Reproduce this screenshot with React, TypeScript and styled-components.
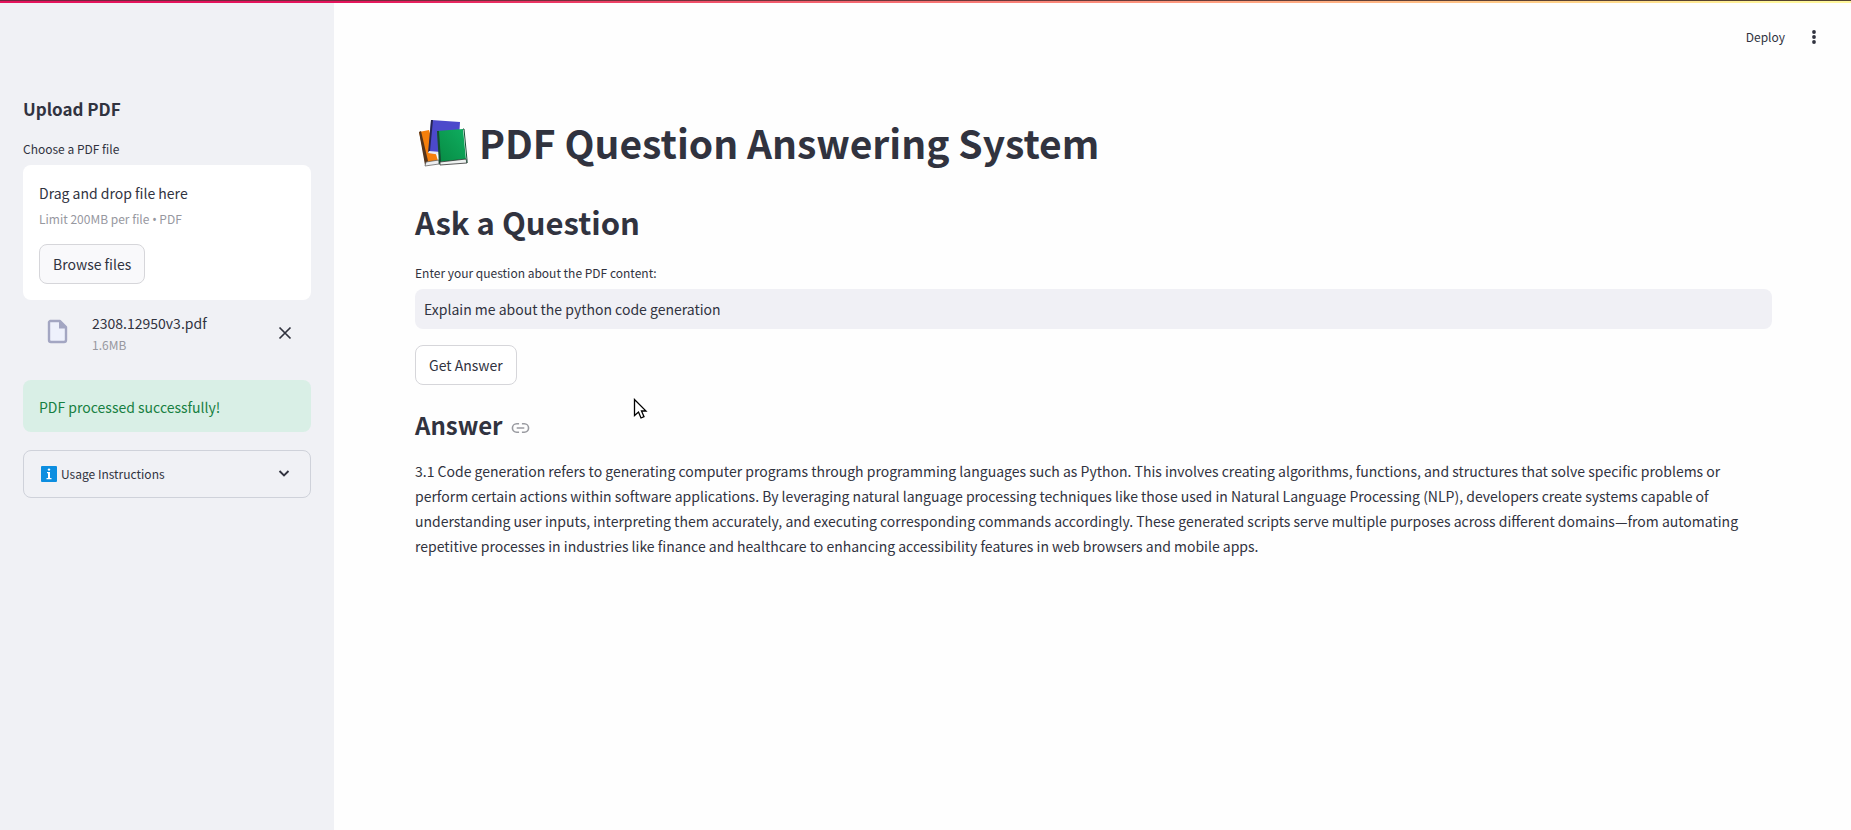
import React from "react";
import styled, { createGlobalStyle } from "styled-components";

const Global = createGlobalStyle`
  *, *::before, *::after { box-sizing: border-box; }
  body {
    margin: 0;
    background: #fefefe;
    color: #31333f;
    font-family: "Noto Sans CJK SC", "Noto Sans", sans-serif;
    font-size: 14px;
    line-height: 26px;
  }
  h1, h2, h3, p { margin: 0; }
  button, input { font: inherit; color: inherit; }
`;

const Page = styled.div`
  display: grid;
  grid-template-columns: 334px minmax(0, 1fr);
  grid-template-rows: 3px auto;
  min-height: 100vh;
`;

const Decoration = styled.div`
  grid-column: 1 / -1;
  border-top: 1px solid #66303c;
  border-image: linear-gradient(90deg, #74243f 0%, #74303c 30%, #664038 70%, #54442f 100%) 1;
  border-width: 1px 0 0;
  background: linear-gradient(90deg, #e4135c 0%, #e4135c 18%, #f05069 38%, #ff9f80 66%, #ffd78a 86%, #fff79c 96%);
`;

const Sidebar = styled.aside`
  background: #f0f1f5;
  padding: 91px 23px 24px;
`;

const SideTitle = styled.h2`
  font-size: 17px;
  line-height: 30px;
  font-weight: 600;
  margin-bottom: 14px;
`;

const FieldLabel = styled.label`
  display: block;
  font-size: 12px;
  line-height: 22px;
  margin-bottom: 5px;
`;

const DropZone = styled.section`
  background: #ffffff;
  border-radius: 8px;
  padding: 15px 16px 16px;
`;

const Muted = styled.p`
  font-size: 12px;
  line-height: 20px;
  color: #97989f;
`;

const Limit = styled(Muted)`
  margin-top: 3px;
`;

const Bullet = styled.span`
  font-family: "Noto Sans", sans-serif;
`;

const Button = styled.button<{ $tint?: boolean }>`
  display: block;
  height: 40px;
  padding: 0 13px;
  border: 1px solid #d6d6da;
  border-radius: 8px;
  background: ${(p) => (p.$tint ? "#f9f9fb" : "#ffffff")};
  white-space: nowrap;
`;

const BrowseButton = styled(Button)`
  margin-top: 14px;
`;

const FileRow = styled.div`
  display: flex;
  align-items: center;
  padding: 11px 16px 7px;
  margin-bottom: 18px;
`;

const FileIcon = styled.svg`
  width: 36px;
  height: 36px;
  flex: none;
`;

const FileInfo = styled.div`
  flex: 1;
  min-width: 0;
  padding-left: 17px;
  line-height: 24px;
`;

const IconButton = styled.button`
  display: flex;
  align-items: center;
  justify-content: center;
  width: 20px;
  height: 24px;
  padding: 0;
  border: 0;
  background: none;
`;

const Success = styled.div`
  padding: 14px 16px 12px;
  margin-bottom: 18px;
  border-radius: 8px;
  background: #d9efe6;
  color: #177f42;
`;

const Expander = styled.button`
  display: flex;
  align-items: center;
  width: 100%;
  height: 48px;
  padding: 0 18px 0 17px;
  border: 1px solid #cfd2da;
  border-radius: 8px;
  background: none;
  font-size: 12px;
`;

const ExpanderText = styled.span`
  flex: 1;
  padding-left: 4px;
  text-align: left;
`;

const Main = styled.main`
  display: flex;
  flex-direction: column;
`;

const Toolbar = styled.header`
  display: flex;
  justify-content: flex-end;
  align-items: center;
  gap: 19px;
  height: 68px;
  padding-right: 27px;
`;

const TextButton = styled.button`
  padding: 0;
  border: 0;
  background: none;
  font-size: 12px;
`;

const Content = styled.div`
  display: flex;
  flex-direction: column;
  align-items: flex-start;
  padding: 38px 79px 40px 81px;
`;

const Title = styled.h1`
  display: flex;
  align-items: center;
  gap: 9px;
  font-size: 39px;
  line-height: 66px;
  font-weight: 700;
  margin-bottom: 22px;
`;

const Heading = styled.h2`
  font-size: 31px;
  line-height: 50px;
  font-weight: 600;
  margin-bottom: 15px;
`;

const QuestionInput = styled.input`
  width: 100%;
  height: 40px;
  padding: 0 9px;
  border: 0;
  border-radius: 8px;
  background: #f0f0f5;
  outline: none;
  margin-bottom: 16px;
`;

const AnswerHeading = styled.h3`
  display: flex;
  align-items: center;
  gap: 8px;
  font-size: 24px;
  line-height: 40px;
  font-weight: 600;
  margin: 20px 0 14px;
`;

const Anchor = styled.a`
  display: flex;
  color: #9a9ba1;
  padding-top: 5px;
`;

const AnswerText = styled.p`
  line-height: 25px;
`;

const Pointer = styled.svg`
  position: absolute;
  left: 633px;
  top: 398px;
`;

const Books = () => (
  <svg width="55" height="52" viewBox="0 0 55 52" aria-hidden="true">
    <defs>
      <linearGradient id="green" x1="0" y1="1" x2="1" y2="0">
        <stop offset="0" stopColor="#078a43" />
        <stop offset="1" stopColor="#0fae60" />
      </linearGradient>
    </defs>
    <path d="M4 16l10-2 9 31-12 3z" fill="#f57f0c" />
    <path d="M4 16l2-1 7 30-3 4z" fill="#55351c" />
    <path d="M11 46l13-2v4l-14 2z" fill="#eceef0" stroke="#555" strokeWidth=".7" />
    <path d="M16 4l29 2-2 32-29-1z" fill="#4c49cb" />
    <path d="M16 4h2l-3 31-2 2z" fill="#262650" />
    <path d="M14 35l12 1v3l-13-2z" fill="#e9ebf2" />
    <path d="M22 15l26-2 3 31-26 2z" fill="url(#green)" />
    <path d="M22 15h2l2 30-2 4z" fill="#164c33" />
    <path d="M25 46l26-3 1 4-27 2z" fill="#eef1f0" stroke="#333" strokeWidth=".8" />
    <path d="M48 13h1l3 31v3" fill="none" stroke="#174c34" />
  </svg>
);

export default function App() {
  return (
    <Page>
      <Global />
      <Decoration />
      <Sidebar>
        <SideTitle>Upload PDF</SideTitle>
        <FieldLabel htmlFor="browse">Choose a PDF file</FieldLabel>
        <DropZone>
          <p>Drag and drop file here</p>
          <Limit>Limit 200MB per file <Bullet>•</Bullet> PDF</Limit>
          <BrowseButton id="browse" type="button" $tint>Browse files</BrowseButton>
        </DropZone>
        <FileRow>
          <FileIcon viewBox="0 0 36 36" aria-hidden="true">
            <path d="M11 6h10l6 6v13a2 2 0 0 1-2 2H12a2 2 0 0 1-2-2V7z" fill="#eef1fc" stroke="#a3a6c2" strokeWidth="2.400" strokeLinejoin="round" />
            <path d="M20 5.500l8 8h-8z" fill="#a3a6c2" />
          </FileIcon>
          <FileInfo>
            <p>2308.12950v3.pdf</p>
            <Muted>1.6MB</Muted>
          </FileInfo>
          <IconButton type="button" aria-label="Remove file">
            <svg width="14" height="14" viewBox="0 0 14 14"><path d="M1.500 1.500l11 11M12.500 1.500l-11 11" stroke="#31333f" strokeWidth="1.700" /></svg>
          </IconButton>
        </FileRow>
        <Success role="status">PDF processed successfully!</Success>
        <Expander type="button" aria-expanded="false">
          <svg width="16" height="16" viewBox="0 0 16 16" aria-hidden="true">
            <rect width="16" height="16" rx="1" fill="#0c8ee0" />
            <path d="M6 6h3v6h1.500v1.200h-5V12H7V7.200H6z" fill="#fff" />
            <circle cx="8" cy="3.600" r="1.200" fill="#fff" />
          </svg>
          <ExpanderText>Usage Instructions</ExpanderText>
          <svg width="16" height="16" viewBox="0 0 16 16" aria-hidden="true"><path d="M3.500 5l4.500 4.500L12.500 5" fill="none" stroke="#31333f" strokeWidth="1.900" /></svg>
        </Expander>
      </Sidebar>
      <Main>
        <Toolbar>
          <TextButton type="button">Deploy</TextButton>
          <IconButton type="button" aria-label="Menu">
            <svg width="6" height="16" viewBox="0 0 6 16" fill="#31333f"><circle cx="3" cy="3" r="1.900" /><circle cx="3" cy="8" r="1.900" /><circle cx="3" cy="13" r="1.900" /></svg>
          </IconButton>
        </Toolbar>
        <Content>
          <Title><Books />PDF Question Answering System</Title>
          <Heading>Ask a Question</Heading>
          <FieldLabel htmlFor="question">Enter your question about the PDF content:</FieldLabel>
          <QuestionInput id="question" type="text" defaultValue="Explain me about the python code generation" />
          <Button type="button">Get Answer</Button>
          <AnswerHeading id="answer">
            Answer
            <Anchor href="#answer" aria-label="Link to answer">
              <svg width="19" height="12" viewBox="0 0 20 12" fill="none" stroke="currentColor" strokeWidth="1.700">
                <path d="M8.500 1.500H6a4.500 4.500 0 0 0 0 9h2.500M11.500 1.500H14a4.500 4.500 0 0 1 0 9h-2.500M6 6h8" />
              </svg>
            </Anchor>
          </AnswerHeading>
          <AnswerText>
            3.1 Code generation refers to generating computer programs through programming languages such as Python. This involves creating algorithms, functions, and structures that solve specific problems or perform certain actions within software applications. By leveraging natural language processing techniques like those used in Natural Language Processing (NLP), developers create systems capable of understanding user inputs, interpreting them accurately, and executing corresponding commands accordingly. These generated scripts serve multiple purposes across different domains—from automating repetitive processes in industries like finance and healthcare to enhancing accessibility features in web browsers and mobile apps.
          </AnswerText>
        </Content>
      </Main>
      <Pointer width="15" height="22" viewBox="0 0 15 22" aria-hidden="true">
        <path d="M1.500 1.500v16l4-3.500 2.500 6 3-1.300-2.500-5.700H13z" fill="#fff" stroke="#000" strokeWidth="1.300" />
      </Pointer>
    </Page>
  );
}
